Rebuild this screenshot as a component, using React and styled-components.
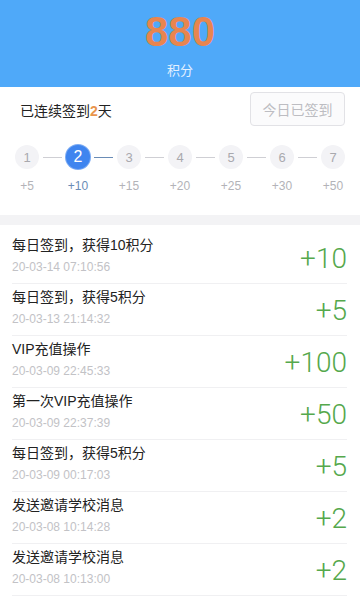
import React from 'react';
import styled, { createGlobalStyle } from 'styled-components';

const GlobalStyle = createGlobalStyle`
  html, body {
    margin: 0;
    padding: 0;
    background: #fff;
    font-family: "Liberation Sans", "Noto Sans CJK SC", sans-serif;
  }
`;

const Page = styled.div`
  width: 360px;
  height: 600px;
  overflow: hidden;
  background: #fff;
`;

const Header = styled.div`
  height: 87px;
  background: #4fa9f9;
  display: flex;
  flex-direction: column;
  align-items: center;
`;

const Score = styled.div`
  margin-top: 13px;
  font-size: 42px;
  line-height: 38px;
  font-weight: bold;
  color: #e8854f;
`;

const ScoreLabel = styled.div`
  margin-top: 11px;
  font-size: 13px;
  line-height: 18px;
  color: #e3f0ff;
`;

const SignSection = styled.div`
  padding: 5px 0 21px;
`;

const SignRow = styled.div`
  display: flex;
  justify-content: space-between;
  align-items: center;
  padding: 0 15px 0 20px;
  height: 34px;
`;

const Streak = styled.div`
  font-size: 14px;
  color: #222;
  padding-top: 2px;
`;

const StreakDays = styled.span`
  color: #e9954c;
  font-weight: bold;
`;

const SignedButton = styled.div`
  width: 93px;
  height: 32px;
  border: 1px solid #e2e2e6;
  border-radius: 4px;
  background: #fbfbfc;
  color: #bdbdc2;
  font-size: 14px;
  display: flex;
  align-items: center;
  justify-content: center;
`;

const Steps = styled.div`
  display: flex;
  padding-left: 15px;
  margin-top: 19px;
`;

const Step = styled.div`
  width: 24px;
  display: flex;
  flex-direction: column;
  align-items: center;
`;

const Circle = styled.div`
  width: 24px;
  height: 24px;
  border-radius: 50%;
  background: ${p => (p.$active ? '#3f85ef' : '#f3f3f6')};
  box-shadow: ${p => (p.$active ? '0 0 0 1px #7aaaf3' : 'none')};
  color: ${p => (p.$active ? '#fff' : '#a9a9ae')};
  font-size: ${p => (p.$active ? '16px' : '13px')};
  display: flex;
  align-items: center;
  justify-content: center;
`;

const Reward = styled.div`
  margin-top: 9px;
  font-size: 12px;
  line-height: 16px;
  white-space: nowrap;
  color: ${p => (p.$active ? '#6a8cb6' : '#b3b3b8')};
`;

const Connector = styled.div`
  width: 19px;
  height: 1px;
  margin: 12px 4px 0;
  background: ${p => (p.$active ? '#6a8cb6' : '#cfcfd4')};
`;

const Gap = styled.div`
  height: 10px;
  background: #f3f3f5;
`;

const List = styled.div`
  padding-top: 7px;
`;

const Record = styled.div`
  margin: 0 13px 0 12px;
  padding: 3px 0 8px;
  display: flex;
  align-items: center;
  justify-content: space-between;
  border-bottom: 1px solid #f0f0f2;
`;

const RecordText = styled.div`
  display: flex;
  flex-direction: column;
`;

const RecordTitle = styled.div`
  font-size: 14px;
  line-height: 20px;
  color: #222;
`;

const RecordDate = styled.div`
  margin-top: 4px;
  font-size: 12px;
  line-height: 16px;
  color: #c2c2c6;
`;

const Amount = styled.div`
  font-family: Roboto, "Liberation Sans", sans-serif;
  font-weight: 300;
  font-size: 28px;
  color: #55a84c;
  padding-top: 6px;
`;

const steps = [5, 10, 15, 20, 25, 30, 50];

const records = [
  { title: '每日签到，获得10积分', date: '20-03-14 07:10:56', amount: 10 },
  { title: '每日签到，获得5积分', date: '20-03-13 21:14:32', amount: 5 },
  { title: 'VIP充值操作', date: '20-03-09 22:45:33', amount: 100 },
  { title: '第一次VIP充值操作', date: '20-03-09 22:37:39', amount: 50 },
  { title: '每日签到，获得5积分', date: '20-03-09 00:17:03', amount: 5 },
  { title: '发送邀请学校消息', date: '20-03-08 10:14:28', amount: 2 },
  { title: '发送邀请学校消息', date: '20-03-08 10:13:00', amount: 2 },
  { title: '每日签到，获得5积分', date: '20-03-08 07:02:11', amount: 5 },
];

const today = 2;

const App = () => (
  <Page>
    <GlobalStyle />
    <Header>
      <Score>880</Score>
      <ScoreLabel>积分</ScoreLabel>
    </Header>

    <SignSection>
      <SignRow>
        <Streak>
          已连续签到<StreakDays>{today}</StreakDays>天
        </Streak>
        <SignedButton>今日已签到</SignedButton>
      </SignRow>
      <Steps>
        {steps.map((pts, i) => (
          <React.Fragment key={i}>
            {i > 0 && <Connector $active={i === today} />}
            <Step>
              <Circle $active={i + 1 === today}>{i + 1}</Circle>
              <Reward $active={i + 1 === today}>+{pts}</Reward>
            </Step>
          </React.Fragment>
        ))}
      </Steps>
    </SignSection>

    <Gap />

    <List>
      {records.map((r, i) => (
        <Record key={i}>
          <RecordText>
            <RecordTitle>{r.title}</RecordTitle>
            <RecordDate>{r.date}</RecordDate>
          </RecordText>
          <Amount>+{r.amount}</Amount>
        </Record>
      ))}
    </List>
  </Page>
);

export default App;
